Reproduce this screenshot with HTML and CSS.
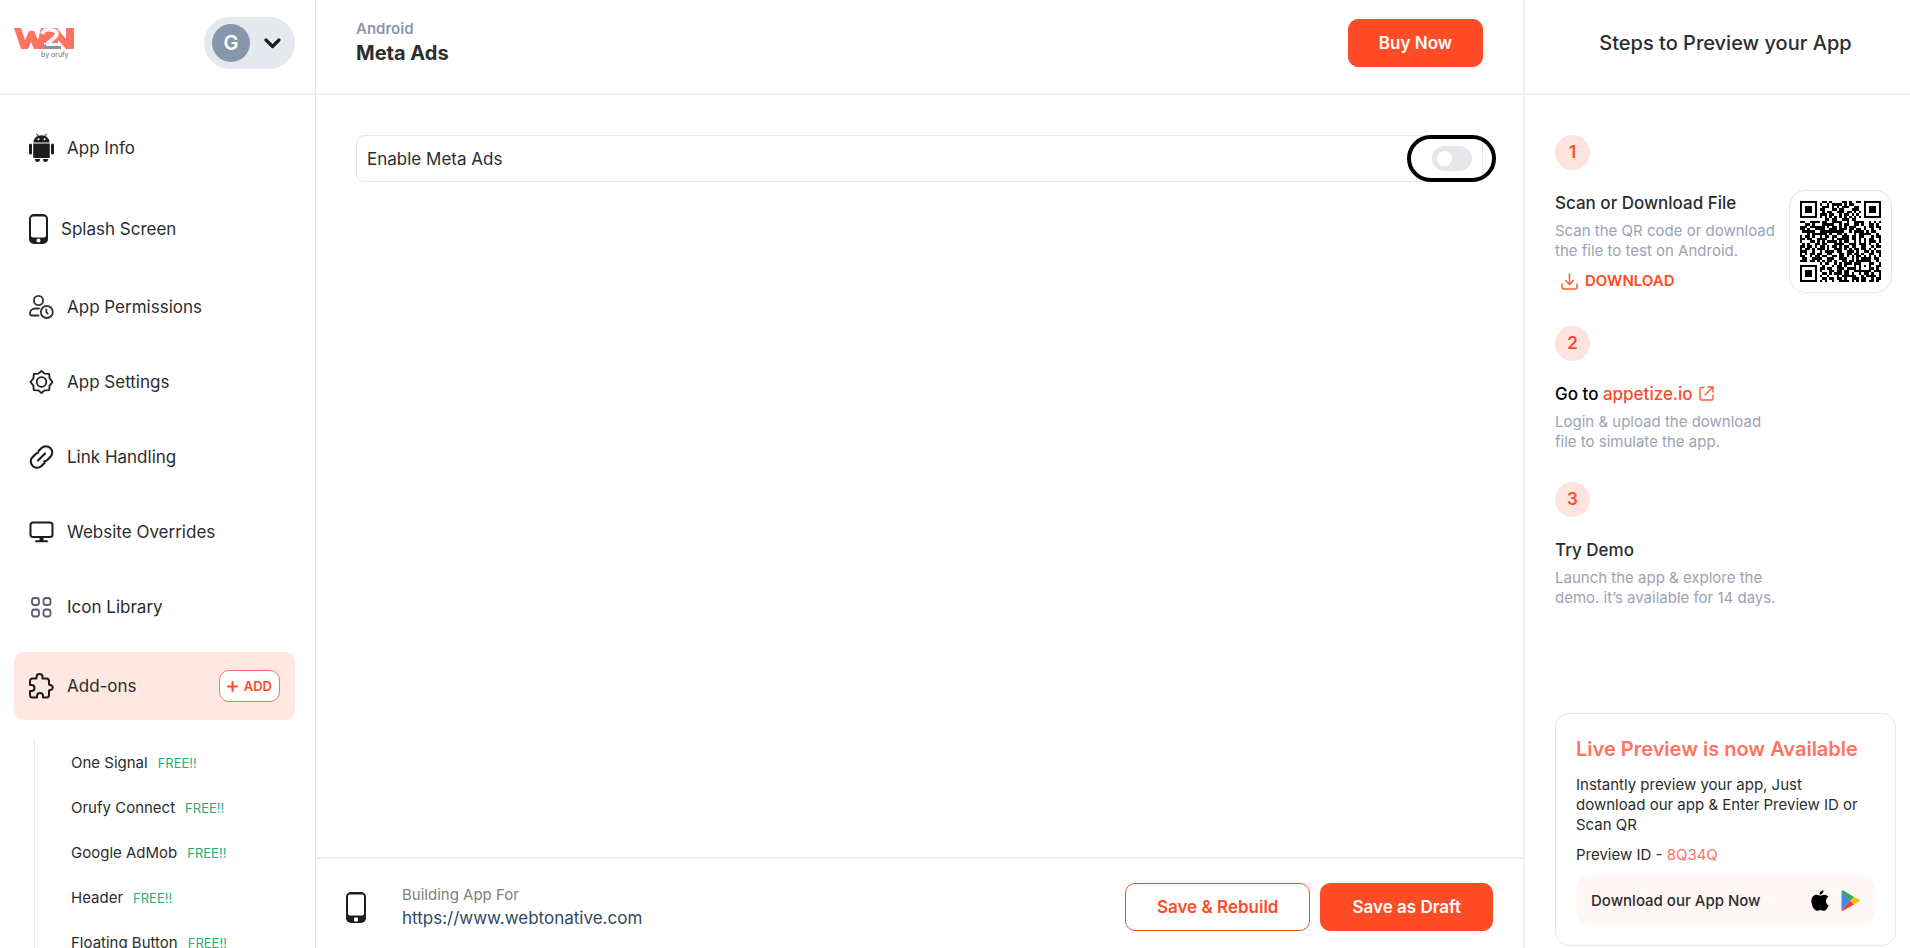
FILE: index.html
```html
<!DOCTYPE html>
<html lang="en">
<head>
  <meta charset="UTF-8">
  <meta name="viewport" content="width=device-width, initial-scale=1.0">
  <title>Meta Ads</title>
  <link rel="stylesheet" href="styles.css">
</head>
<body>

<div class="app">
  <aside class="sidebar">
    <div class="bar sidebar-top">
      <svg class="logo" width="60" height="32" viewBox="0 0 60 32" role="img" aria-label="W2N by orufy">
        <path fill="#ff7360" d="M0 0h7l4 12 4-9h5l4 9 3-12h16l9 11V0h8v21h-8l-8-9v9H20l-3-7-3 7H7z"/>
        <path d="M28 6c2-5 6-5 10-4 6 1 6 5 2 8l-7 6" fill="none" stroke="#f4f5f7" stroke-width="4"/>
        <path fill="#f4f5f7" d="M30 15h17v3H30z"/>
        <path fill="#8794a8" d="M28 18l4-2v2h15v3H32z"/>
        <text x="27" y="29" class="logo-text">by orufy</text>
      </svg>
      <button class="account" aria-label="Account">
        <span class="avatar">G</span>
        <svg width="17" height="11" viewBox="0 0 17 11" fill="none" stroke="#1f1f1f" stroke-width="3.2" stroke-linecap="round" stroke-linejoin="round"><path d="M2 2l6.500 6.500L15 2"/></svg>
      </button>
    </div>

    <nav class="nav">
      <a class="nav-item" href="#">
        <svg width="25" height="30" viewBox="0 0 25 30" fill="#1b1d1f">
          <path d="M4.500 9.500C4.500 6 7 3.800 8.800 3L7 1l.7-.5 2 2.200a8 8 0 0 1 5.600 0l2-2.200.7.500-1.800 2c1.800.8 4.300 3 4.300 6.500z"/>
          <circle cx="9.500" cy="6.200" r="1" fill="#fff"/><circle cx="15.500" cy="6.200" r="1" fill="#fff"/>
          <path d="M4.200 10.500h16.600V24a1 1 0 0 1-1 1H5.200a1 1 0 0 1-1-1z"/>
          <rect x="0" y="10.500" width="3" height="11" rx="1.500"/><rect x="22" y="10.500" width="3" height="11" rx="1.500"/>
          <path d="M6 26h5a2.500 3 0 0 1-5 0zM14 26h5a2.500 3 0 0 1-5 0z"/>
        </svg>
        App Info
      </a>
      <a class="nav-item" href="#">
        <svg width="19" height="30" viewBox="0 0 19 30">
          <rect width="19" height="30" rx="5" fill="#1b1d1f"/><rect x="2" y="2.500" width="15" height="21" rx="2" fill="#fff"/><circle cx="9.500" cy="26.500" r="2" fill="#fff"/>
        </svg>
        Splash Screen
      </a>
      <a class="nav-item" href="#">
        <svg width="25" height="24" viewBox="0 0 25 24" fill="none" stroke="#333" stroke-width="1.800" stroke-linecap="round">
          <circle cx="9.500" cy="5.500" r="4.600"/><path d="M10 13.500H6.500C3 13.500 1 15.500 1 18.500c0 1.500.8 2 2 2h6.500"/>
          <circle cx="17.800" cy="17" r="6"/><path d="M17.300 14.500v2.700l1.500 1.500"/>
        </svg>
        App Permissions
      </a>
      <a class="nav-item" href="#">
        <svg width="25" height="24" viewBox="0 0 25 24" fill="none" stroke="#1b1d1f" stroke-width="1.800" stroke-linejoin="round">
          <path d="M12.500 1l3.200 2.600 4.500.2.400 4.600 2.900 3.600-2.900 3.600-.4 4.600-4.500.2-3.200 2.600-3.200-2.600-4.500-.2-.4-4.600L1.500 12l2.900-3.600.4-4.600 4.500-.2z"/>
          <circle cx="12.500" cy="12" r="4.800"/>
        </svg>
        App Settings
      </a>
      <a class="nav-item" href="#">
        <svg width="25" height="24" viewBox="0 0 25 24" fill="none" stroke="#1b1d1f" stroke-width="2.200" stroke-linecap="round">
          <path d="M9.500 6l3-3c2.600-2.300 6.300-2.300 8.800 0 2.500 2.600 2.500 6.300 0 8.900l-2.800 2.800c-1 .9-2 1.400-3.200 1.600"/>
          <path d="M15.500 18l-3 3c-2.600 2.300-6.300 2.300-8.800 0-2.500-2.600-2.500-6.300 0-8.900l2.800-2.800c.8-.8 1.700-1.200 2.700-1.500"/>
          <path d="M9 15.500l7-7"/>
        </svg>
        Link Handling
      </a>
      <a class="nav-item" href="#">
        <svg width="25" height="24" viewBox="0 0 25 24" fill="none" stroke="#1b1d1f" stroke-width="2" stroke-linecap="round">
          <rect x="1.500" y="2.500" width="22" height="14.500" rx="2.500"/><path d="M7 21.200h11"/><path d="M12.500 17v4" stroke-width="4" stroke-linecap="butt"/>
        </svg>
        Website Overrides
      </a>
      <a class="nav-item" href="#">
        <svg width="25" height="24" viewBox="0 0 25 24" fill="none" stroke="#5b5b78" stroke-width="1.800">
          <rect x="3" y="3" width="7" height="7" rx="2.500"/><rect x="14.500" y="3" width="7" height="7" rx="2.500"/>
          <rect x="3" y="14.500" width="7" height="7" rx="2.500"/><rect x="14.500" y="14.500" width="7" height="7" rx="2.500"/>
        </svg>
        Icon Library
      </a>
      <div class="nav-item active">
        <svg width="25" height="26" viewBox="0 0 25 26" fill="none" stroke="#1b1d1f" stroke-width="2" stroke-linejoin="round">
          <path d="M7.500 5.500V4a3 3 0 0 1 6 0v1.500h4A2.500 2.500 0 0 1 20 8v3.500l2.500 1a2.200 2.200 0 0 1 0 4L20 17.500V22a2.500 2.500 0 0 1-2.500 2.500H14V23a3 3 0 0 0-6 0v1.500H3.500A2.500 2.500 0 0 1 1 22v-4h1.500a3 3 0 0 0 0-6H1V8a2.500 2.500 0 0 1 2.500-2.500z"/>
        </svg>
        <a href="#">Add-ons</a>
        <button class="add">
          <svg width="11" height="11" viewBox="0 0 11 11" fill="none" stroke="#ff4b26" stroke-width="2" stroke-linecap="round"><path d="M5.500 1v9M1 5.500h9"/></svg>
          ADD
        </button>
      </div>
      <ul class="sub-nav">
        <li><a href="#">One Signal</a><span class="free">FREE!!</span></li>
        <li><a href="#">Orufy Connect</a><span class="free">FREE!!</span></li>
        <li><a href="#">Google AdMob</a><span class="free">FREE!!</span></li>
        <li><a href="#">Header</a><span class="free">FREE!!</span></li>
        <li><a href="#">Floating Button</a><span class="free">FREE!!</span></li>
      </ul>
    </nav>
  </aside>

  <main class="main">
    <header class="bar main-top">
      <div>
        <div class="platform">Android</div>
        <h1>Meta Ads</h1>
      </div>
      <button class="btn btn-fill">Buy Now</button>
    </header>

    <section class="content">
      <div class="setting">
        <label for="metaAds">Enable Meta Ads</label>
        <input class="toggle" type="checkbox" id="metaAds">
        <span class="highlight"></span>
      </div>
    </section>

    <footer class="footer">
      <svg width="20" height="31" viewBox="0 0 20 31">
        <rect width="20" height="31" rx="5" fill="#1b1d1f"/><rect x="2" y="2.500" width="16" height="21" rx="2" fill="#fff"/><rect x="8" y="25.500" width="4" height="4" rx="1" fill="#fff"/>
      </svg>
      <div class="building">
        <div class="building-label">Building App For</div>
        <div class="building-url">https://www.webtonative.com</div>
      </div>
      <div class="actions">
        <button class="btn btn-line">Save &amp; Rebuild</button>
        <button class="btn btn-fill">Save as Draft</button>
      </div>
    </footer>
  </main>

  <aside class="preview">
    <div class="bar preview-top"><h2>Steps to Preview your App</h2></div>
    <div class="steps">
      <div class="step">
        <span class="num">1</span>
        <div class="step-row">
          <div class="step-text">
            <h3>Scan or Download File</h3>
            <p>Scan the QR code or download<br>the file to test on Android.</p>
            <a class="download" href="#">
              <svg width="17" height="17" viewBox="0 0 17 17" fill="none" stroke="#ff5a38" stroke-width="1.500" stroke-linecap="round" stroke-linejoin="round"><path d="M8.500 1v10M4.500 7.500l4 4 4-4M1 11v3a2 2 0 0 0 2 2h11a2 2 0 0 0 2-2v-3"/></svg>
              DOWNLOAD
            </a>
          </div>
          <div class="qr-box">
            <svg id="qr" width="81" height="81" viewBox="0 0 33 33" shape-rendering="crispEdges" role="img" aria-label="QR code"></svg>
          </div>
        </div>
      </div>
      <div class="step">
        <span class="num">2</span>
        <h3 class="black">Go to <a href="#">appetize.io
          <svg width="15" height="15" viewBox="0 0 15 15" fill="none" stroke="#ff5a38" stroke-width="1.400" stroke-linecap="round" stroke-linejoin="round"><path d="M5 1.500H2.500a1.500 1.500 0 0 0-1.500 1.500v9.500A1.500 1.500 0 0 0 2.500 14h10a1.500 1.500 0 0 0 1.500-1.500V9M9 1h5v5M14 1L6 9"/></svg></a></h3>
        <p>Login &amp; upload the download<br>file to simulate the app.</p>
      </div>
      <div class="step">
        <span class="num">3</span>
        <h3>Try Demo</h3>
        <p>Launch the app &amp; explore the<br>demo. it’s available for 14 days.</p>
      </div>
    </div>

    <div class="live">
      <h2>Live Preview is now Available</h2>
      <p>Instantly preview your app, Just<br>download our app &amp; Enter Preview ID or Scan QR</p>
      <div class="preview-id">Preview ID - <span>8Q34Q</span></div>
      <div class="stores">
        Download our App Now
        <svg class="apple" width="18" height="21" viewBox="0 0 18 21"><path d="M12.500.2c.2 2.400-1.800 4.500-4 4.500C8.300 2.500 10.200.5 12.500.2zM15 11c0-2 1-3.500 2.400-4.300-1-1.300-2.500-2-4.200-2-1.700 0-2.800 1-3.900 1-1.200 0-2.400-1-3.900-1C2.800 4.700.4 7 .4 11.300c0 4.300 3 9.500 5.500 9.500 1.300 0 1.900-.9 3.500-.9s2.100.9 3.500.9c2 0 3.900-3 4.700-5.300C16 14.800 15 13.200 15 11z"/></svg>
        <svg width="19" height="21" viewBox="0 0 19 21"><path fill="#4285f4" d="M.5 1v19l8.500-9.500z"/><path fill="#34a853" d="M.5 1C.7.200 1.500.1 2.300.5L13 7l-4 4z"/><path fill="#ea4335" d="M.5 20c.2.800 1 .9 1.800.5L13 14.500 9 10.500z"/><path fill="#fbbc04" d="M13 6.800l5 2.800c.9.500.9 1.400 0 1.900l-5 3-4-4z"/></svg>
      </div>
    </div>
  </aside>
</div>

<script src="qr.js"></script>
</body>
</html>
```
FILE: qr.js
```js
// one string per row of modules, # = dark
const rows = [
  "#######..##.#....##.#..##.#######",
  "#.....#.#..#.####.#.##....#.....#",
  "#.###.#..###.#.#.###..##..#.###.#",
  "#.###.#.##...##.##...###..#.###.#",
  "#.###.#..#.##..###.##.#.#.#.###.#",
  "#.....#.###.##..#.##.#.#..#.....#",
  "#######.#.#.#.#.#.#.#.#.#.#######",
  "..........##.##..###.##..........",
  "##..####.##..####..#..####..#.#.#",
  "..##.#...#####..#.##..##.#..##.#.",
  "###.######.#.##.#.#.###...#.##.##",
  "##.#..####..###.###.##.##.#..#..#",
  ".#####..##########..#.####.#.##..",
  "...#.######.#..##.#...#.#####..#.",
  "#.##.#..#.##.##..###.##.##...#.##",
  "##.##..####..#.#####.##.#.#.##..#",
  "#...##.#.#.####.#.##..#.#.#.###.#",
  ".#.#..##.##...####..###.###.#..#.",
  "##.##.#.##.#.##.#.##.##..##..#.##",
  "#.##.#.###.#..###.#.#.##.##.#.#..",
  "###..#..#.####.##..###.#..##.#.##",
  "#.#.##.##..##...##.##.##.#..##..#",
  "##..#.##.##..##.##.#.#.##.#.#.#.#",
  ".##..####..###..###..#.#.####.##.",
  "###.##.#.#.##.#..##.##.######..#.",
  "........#.##..#.#.###.###...##..#",
  "#######..#...#.##.#...#.#.#.#..##",
  "#.....#.##.##..###.####.#...##.#.",
  "#.###.#.#...##.##.##..#######.###",
  "#.###.#..##.#.###.##.#..#.##.#..#",
  "#.###.#.#..#...#.######..#.####.#",
  "#.....#..##.##.##.#..###.##..#.##",
  "#######.#.#..#..####.#.#.##.##.#."
];

let d = "";
rows.forEach((row, y) => {
  [...row].forEach((cell, x) => {
    if (cell === "#") d += `M${x} ${y}h1v1h-1z`;
  });
});
document.getElementById("qr").innerHTML = `<path d="${d}"/>`;
```
FILE: styles.css
```css
:root {
  --orange: #ff4b26;
  --coral: #ff7360;
  --text: #2b2d2f;
  --muted: #9ba3b3;
  --line: #e5e7eb;
  --line-soft: #f1f1f4;
}
* {
  box-sizing: border-box;
}
body {
  margin: 0;
  background: #fff;
  color: var(--text);
  font-family: Inter, "Liberation Sans", sans-serif;
  font-size: 17px;
}
h1, h2, h3, p, ul {
  margin: 0;
  padding: 0;
}
a {
  color: inherit;
  text-decoration: none;
}
button {
  font-family: inherit;
  cursor: pointer;
}
svg {
  flex: none;
}
.app {
  display: grid;
  grid-template-columns: 316px 1fr 385px;
  height: 100vh;
  overflow: hidden;
}
.bar {
  height: 95px;
  flex: none;
  display: flex;
  align-items: center;
  padding-bottom: 8px;
  border-bottom: 2px solid var(--line-soft);
}

/* sidebar */
.sidebar {
  display: flex;
  flex-direction: column;
  min-height: 0;
  overflow: hidden;
  border-right: 1px solid var(--line);
}
.sidebar-top {
  justify-content: space-between;
  align-items: flex-start;
  padding: 17px 20px 0 14px;
}
.logo {
  margin-top: 11px;
}
.logo-text {
  font-size: 7px;
  fill: #5d6b80;
}
.account {
  display: flex;
  align-items: center;
  gap: 14px;
  height: 52px;
  padding: 0 14px 0 8px;
  border: none;
  border-radius: 26px;
  background: #e5e8ed;
}
.avatar {
  width: 38px;
  height: 38px;
  border-radius: 50%;
  background: #8796aa;
  color: #fff;
  font-size: 20px;
  font-weight: 600;
  line-height: 38px;
}
.nav {
  display: flex;
  flex-direction: column;
  gap: 15px;
  padding: 20px 20px 0 14px;
}
.nav-item {
  display: flex;
  align-items: center;
  flex: none;
  gap: 13px;
  padding: 18px 15px;
  border-radius: 10px;
  line-height: 24px;
}
.active {
  background: #ffe7e2;
}
.add {
  display: flex;
  align-items: center;
  gap: 6px;
  height: 32px;
  margin-left: auto;
  padding: 0 7px;
  border: 1px solid var(--coral);
  border-radius: 10px;
  background: #fff;
  color: var(--orange);
  font-size: 13px;
  font-weight: 600;
}
.sub-nav {
  list-style: none;
  margin: 5px 0 0 20px;
  border-left: 1px solid var(--line);
}
.sub-nav li {
  display: flex;
  align-items: center;
  gap: 10px;
  height: 45px;
  padding-left: 36px;
  font-size: 15px;
}
.free {
  color: #1fae76;
  font-size: 13px;
}

/* main column */
.main {
  display: flex;
  flex-direction: column;
  min-width: 0;
  border-right: 2px solid var(--line-soft);
}
.main-top {
  padding-left: 40px;
  padding-right: 40px;
  justify-content: space-between;
}
.platform {
  color: #8796aa;
  font-size: 15px;
  font-weight: 600;
  line-height: 20px;
}
h1 {
  font-size: 20px;
  font-weight: 700;
  line-height: 28px;
}
.btn {
  height: 48px;
  padding: 0 30px;
  border: 1px solid var(--orange);
  border-radius: 10px;
  font-size: 17px;
  font-weight: 600;
}
.btn-fill {
  background: var(--orange);
  color: #fff;
}
.btn-line {
  background: #fff;
  color: var(--orange);
}
.content {
  flex: 1;
  padding: 40px;
}
.setting {
  position: relative;
  display: flex;
  align-items: center;
  justify-content: space-between;
  height: 47px;
  padding: 0 10px;
  border: 1px solid var(--line);
  border-radius: 8px;
}
.toggle {
  appearance: none;
  width: 40px;
  height: 25px;
  margin: 0;
  padding: 5px;
  border-radius: 13px;
  background: #e5e7eb;
}
.toggle::before {
  content: "";
  display: block;
  width: 15px;
  height: 15px;
  border-radius: 50%;
  background: #fff;
}
.toggle:checked {
  background: var(--orange);
}
.highlight {
  position: absolute;
  top: -1px;
  right: -14px;
  width: 89px;
  height: 47px;
  border: 4px solid #000;
  border-radius: 24px;
  pointer-events: none;
}
.footer {
  display: flex;
  align-items: center;
  height: 91px;
  padding: 7px 30px 0;
  border-top: 2px solid var(--line-soft);
}
.building {
  margin-left: 36px;
}
.building-label {
  color: #808080;
  font-size: 15px;
  line-height: 22px;
}
.building-url {
  color: #334862;
  font-size: 17px;
  line-height: 24px;
}
.actions {
  display: flex;
  gap: 10px;
  margin-left: auto;
}
.actions .btn {
  padding: 0 31px;
}

/* preview column */
.preview {
  display: flex;
  flex-direction: column;
}
.preview-top {
  justify-content: center;
  padding-left: 16px;
}
h2 {
  font-size: 20px;
  font-weight: 500;
}
.steps {
  display: flex;
  flex-direction: column;
  gap: 30px;
  padding: 40px 18px 0 30px;
}
.num {
  display: block;
  width: 35px;
  height: 35px;
  margin-bottom: 20px;
  border-radius: 50%;
  background: #fde4df;
  color: var(--orange);
  font-size: 17px;
  font-weight: 600;
  line-height: 35px;
  text-align: center;
}
.step-row {
  display: flex;
  justify-content: space-between;
  padding-bottom: 3px;
}
h3 {
  font-size: 17px;
  font-weight: 500;
  line-height: 26px;
}
.black {
  color: #000;
}
.black a {
  color: var(--orange);
}
.black svg {
  margin-left: 2px;
  vertical-align: -1px;
}
.step p {
  margin-top: 5px;
  color: var(--muted);
  font-size: 15px;
  line-height: 20px;
}
.download {
  display: flex;
  align-items: center;
  gap: 7px;
  margin-top: 10px;
  padding-left: 6px;
  color: var(--orange);
  font-size: 15px;
  font-weight: 600;
  line-height: 20px;
}
.qr-box {
  width: 103px;
  height: 103px;
  padding: 10px;
  border: 1px solid var(--line);
  border-radius: 16px;
}
.live {
  margin: auto 14px 2px 30px;
  padding: 20px;
  border: 1px solid var(--line);
  border-radius: 14px;
}
.live h2 {
  color: var(--coral);
  font-weight: 600;
  line-height: 30px;
}
.live p {
  margin-top: 11px;
  font-size: 15px;
  line-height: 20px;
}
.preview-id {
  margin: 10px 0;
  font-size: 15px;
  line-height: 20px;
}
.preview-id span {
  color: var(--coral);
}
.stores {
  display: flex;
  align-items: center;
  gap: 12px;
  height: 50px;
  padding: 0 15px;
  border-radius: 14px;
  background: #fff6f5;
  font-size: 15px;
  font-weight: 500;
}
.apple {
  margin-left: auto;
}
```
